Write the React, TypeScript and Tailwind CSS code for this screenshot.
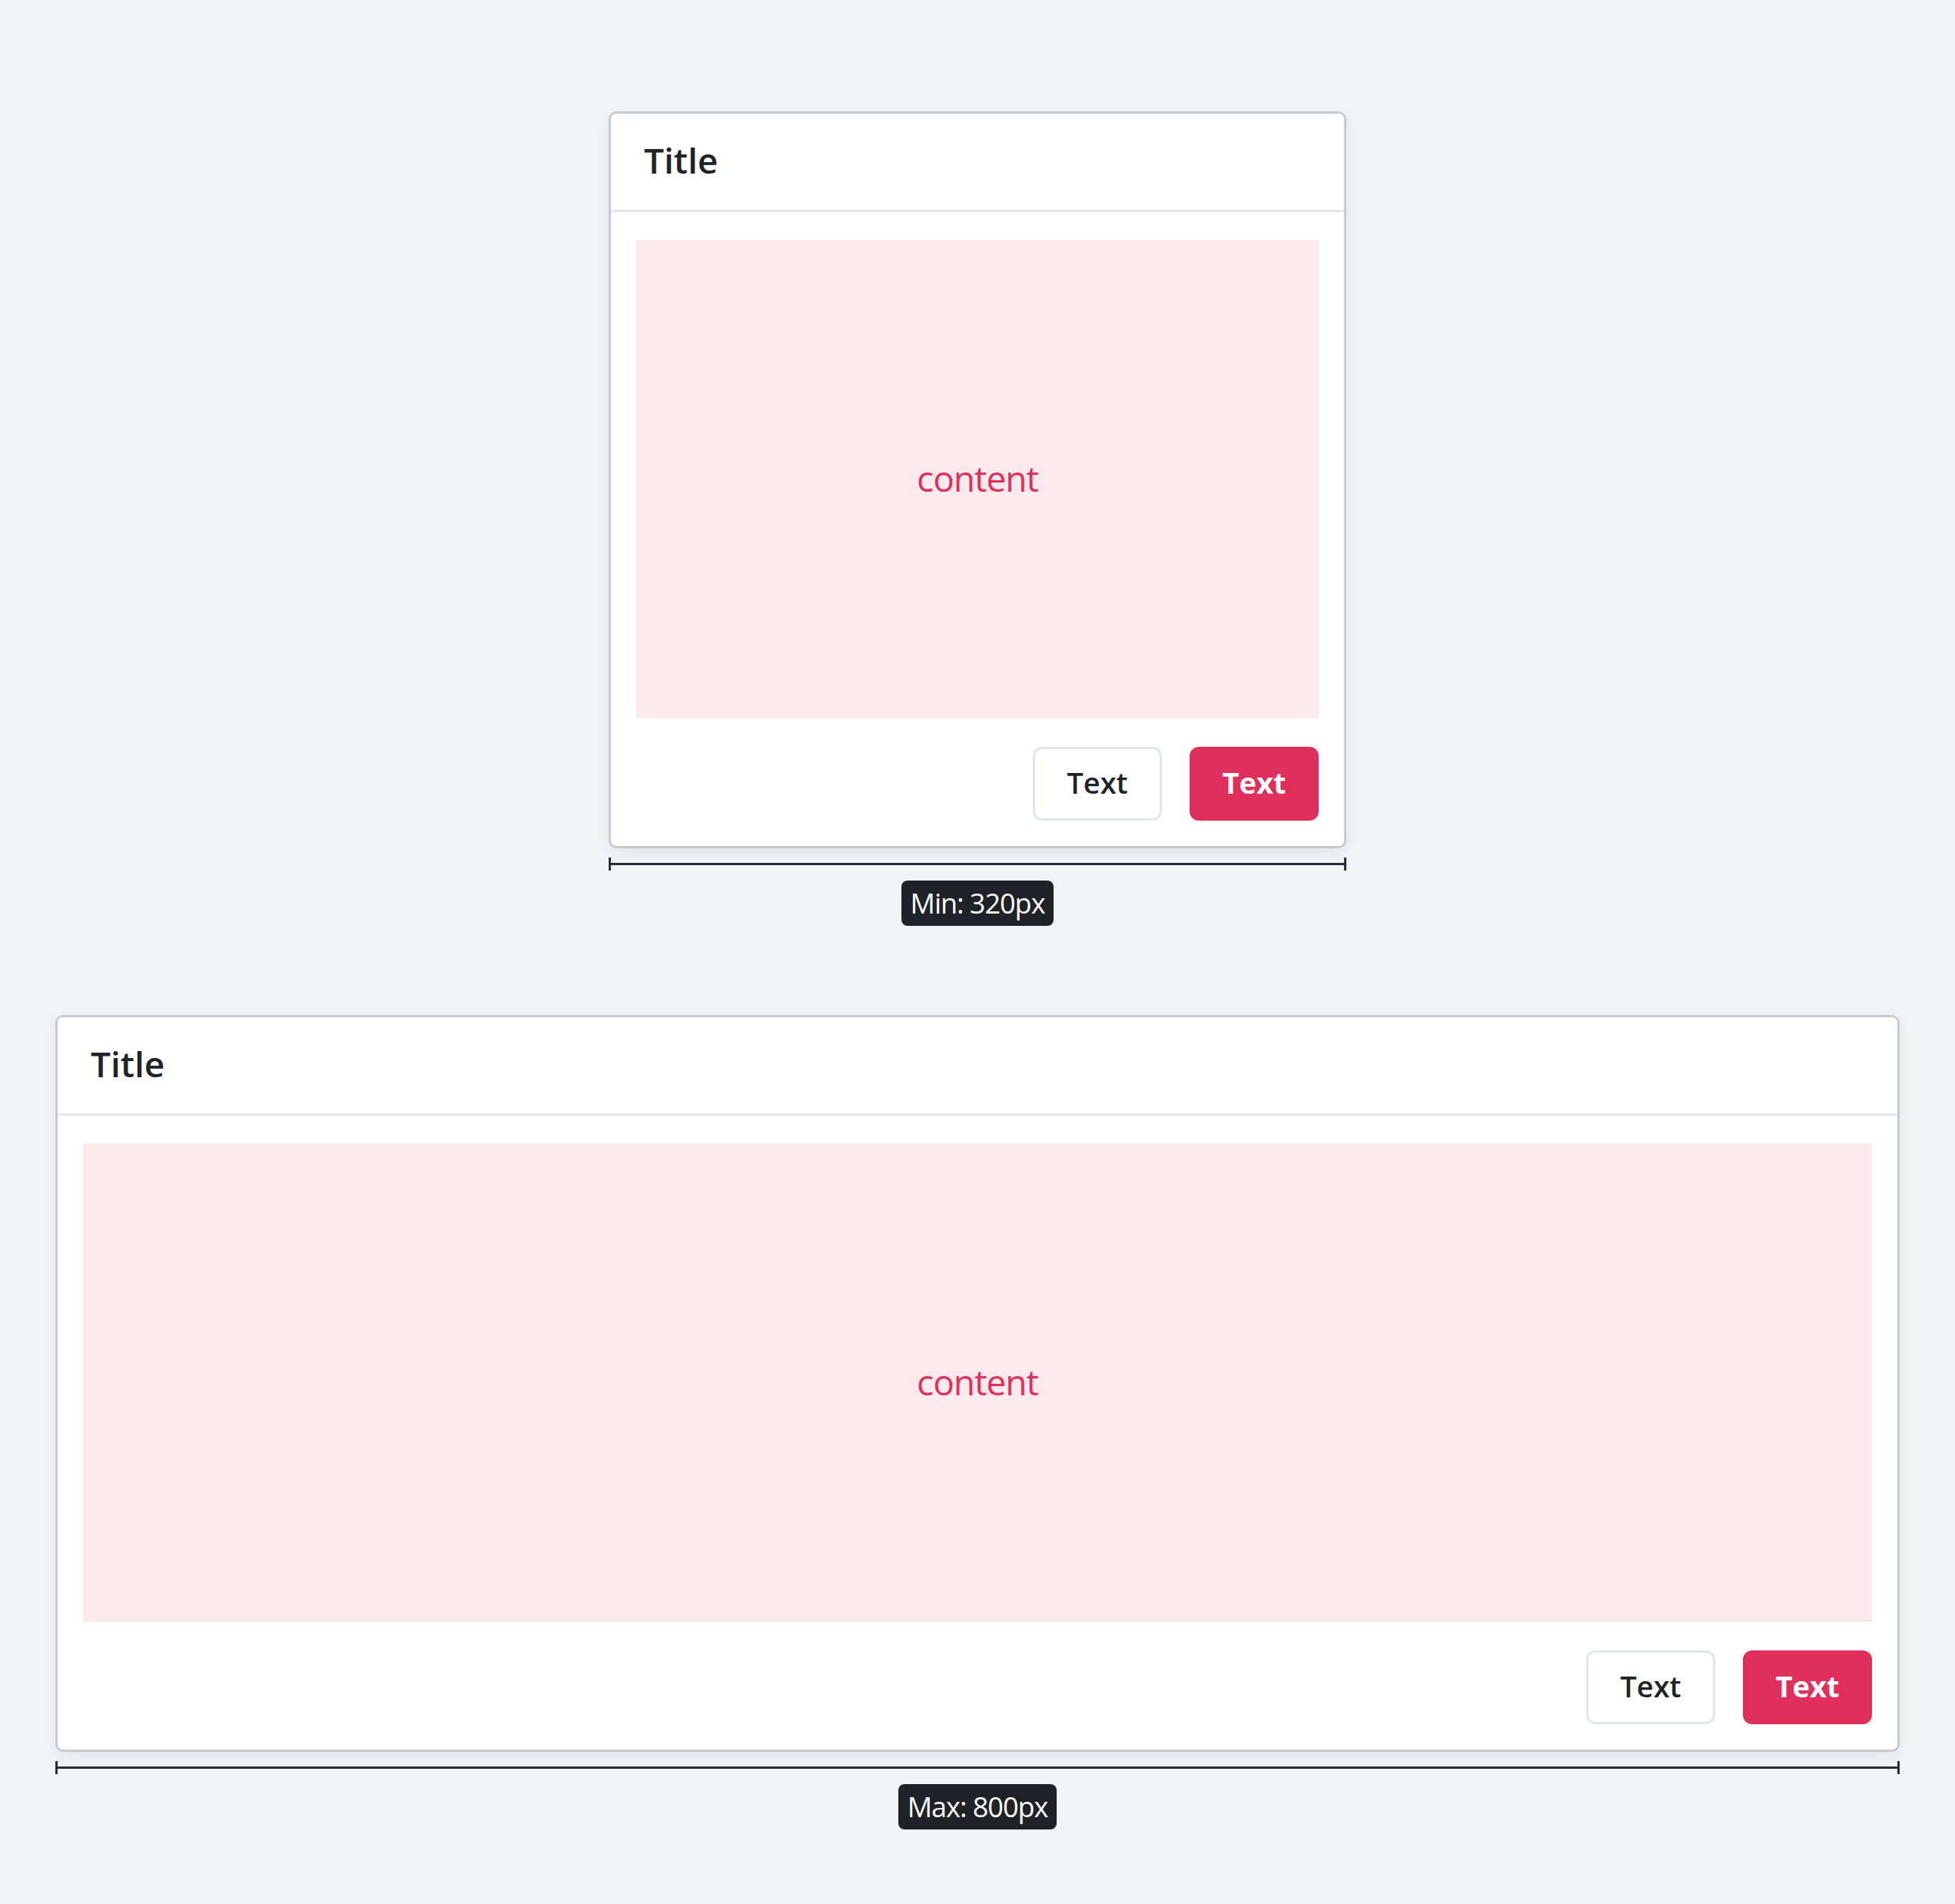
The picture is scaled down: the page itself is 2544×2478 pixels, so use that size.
const font = { fontFamily: '"Open Sans", "Noto Sans", sans-serif' };

interface PanelProps {
  width: string;
  label: string;
}

// Card preview with header, content slot and action row
const Panel = ({ width, label }: PanelProps) => {
  return (
    <div className={`flex flex-col ${width}`}>
      <div className="flex flex-col bg-white border-[3px] border-[#c9cacf] rounded-[10px] shadow-[0_6px_20px_rgba(15,23,42,0.08)]">
        {/* Header */}
        <div className="h-[128px] flex items-center pl-[43px] pb-[5px] border-b-[3px] border-[#e3e5e8]">
          <h2 className="text-[46px] font-semibold text-[#202328] leading-none">Title</h2>
        </div>

        {/* Body */}
        <div className="flex flex-col pt-[36px] px-[33px] pb-[33px] gap-[37px]">
          <div className="h-[623px] bg-[#fce9ed] flex items-center justify-center pb-[3px]">
            <span className="text-[46px] tracking-[-1px] text-[#e02f5a] leading-none">content</span>
          </div>
          <div className="flex justify-end gap-[36px]">
            <button className="w-[168px] h-[96px] pb-[3px] rounded-[12px] border-[3px] border-[#e2e5ea] bg-white text-[38px] font-semibold text-[#202328] flex items-center justify-center">
              Text
            </button>
            <button className="w-[168px] h-[96px] pb-[3px] rounded-[12px] bg-[#e02f5a] text-[38px] font-bold text-white flex items-center justify-center">
              Text
            </button>
          </div>
        </div>
      </div>

      {/* Width marker */}
      <div className="mt-[12px] h-[17px] flex items-center">
        <div className="w-[3px] h-[17px] bg-[#2a2e33]" />
        <div className="flex-1 h-[3px] bg-[#2a2e33]" />
        <div className="w-[3px] h-[17px] bg-[#2a2e33]" />
      </div>
      <div className="mt-[13px] flex justify-center">
        <span className="h-[59px] px-[12px] rounded-[8px] bg-[#1f2227] text-white text-[36px] tracking-[-1px] flex items-center leading-none">
          {label}
        </span>
      </div>
    </div>
  );
};

export default function App() {
  return (
    <div className="min-h-screen bg-[#f2f5f8] flex flex-col items-center pt-[145px] pb-[97px] gap-[116px]" style={font}>
      <Panel width="w-[960px]" label="Min: 320px" />
      <Panel width="w-[2400px]" label="Max: 800px" />
    </div>
  );
}
